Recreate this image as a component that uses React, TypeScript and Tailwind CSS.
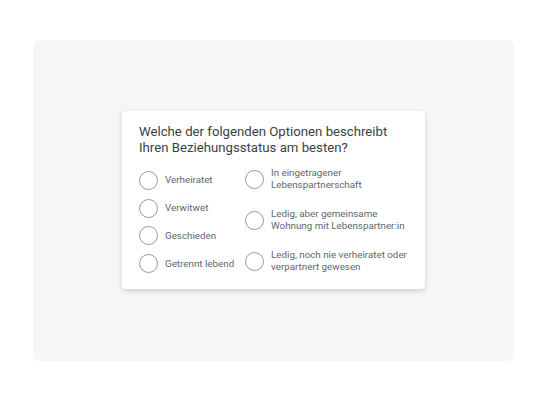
import React from "react";

const Radio = () => (
  <span className="block w-[19px] h-[19px] shrink-0 rounded-full border border-[#9b9b9b] bg-white" />
);

const left = ["Verheiratet", "Verwitwet", "Geschieden", "Getrennt lebend"];
const right = [
  ["In eingetragener", "Lebenspartnerschaft"],
  ["Ledig, aber gemeinsame", "Wohnung mit Lebenspartner:in"],
  ["Ledig, noch nie verheiratet oder", "verpartnert gewesen"],
];

export default function App() {
  return (
    <div className="w-[547px] h-[400px] bg-white flex items-center justify-center" style={{ fontFamily: 'Roboto, "Noto Sans", sans-serif' }}>
      <div className="w-[481px] h-[321px] rounded-[6px] bg-[#f6f6f6] flex items-center justify-center">
        <div className="w-[303px] bg-white rounded-[4px] shadow-[0_2px_5px_rgba(0,0,0,0.16)] pt-[13px] pl-[17px] pr-[10px] pb-[16px]">
          <div className="text-[13.2px] leading-[16.5px] text-[#3a3f44]">
            Welche der folgenden Optionen beschreibt
            <br />
            Ihren Beziehungsstatus am besten?
          </div>
          <div className="flex mt-[11px]">
            <div className="w-[106px] flex flex-col gap-[8.7px] pt-[3px]">
              {left.map((l) => (
                <div key={l} className="flex items-center gap-[7px] h-[19px]">
                  <Radio />
                  <span className="text-[9.8px] leading-[12px] text-[#62676c] whitespace-nowrap">{l}</span>
                </div>
              ))}
            </div>
            <div className="flex flex-col gap-[18px]">
              {right.map((r) => (
                <div key={r[0]} className="flex items-center gap-[7px] h-[23px]">
                  <Radio />
                  <span className="text-[9.8px] leading-[12px] text-[#62676c] whitespace-nowrap">
                    {r[0]}
                    <br />
                    {r[1]}
                  </span>
                </div>
              ))}
            </div>
          </div>
        </div>
      </div>
    </div>
  );
}
